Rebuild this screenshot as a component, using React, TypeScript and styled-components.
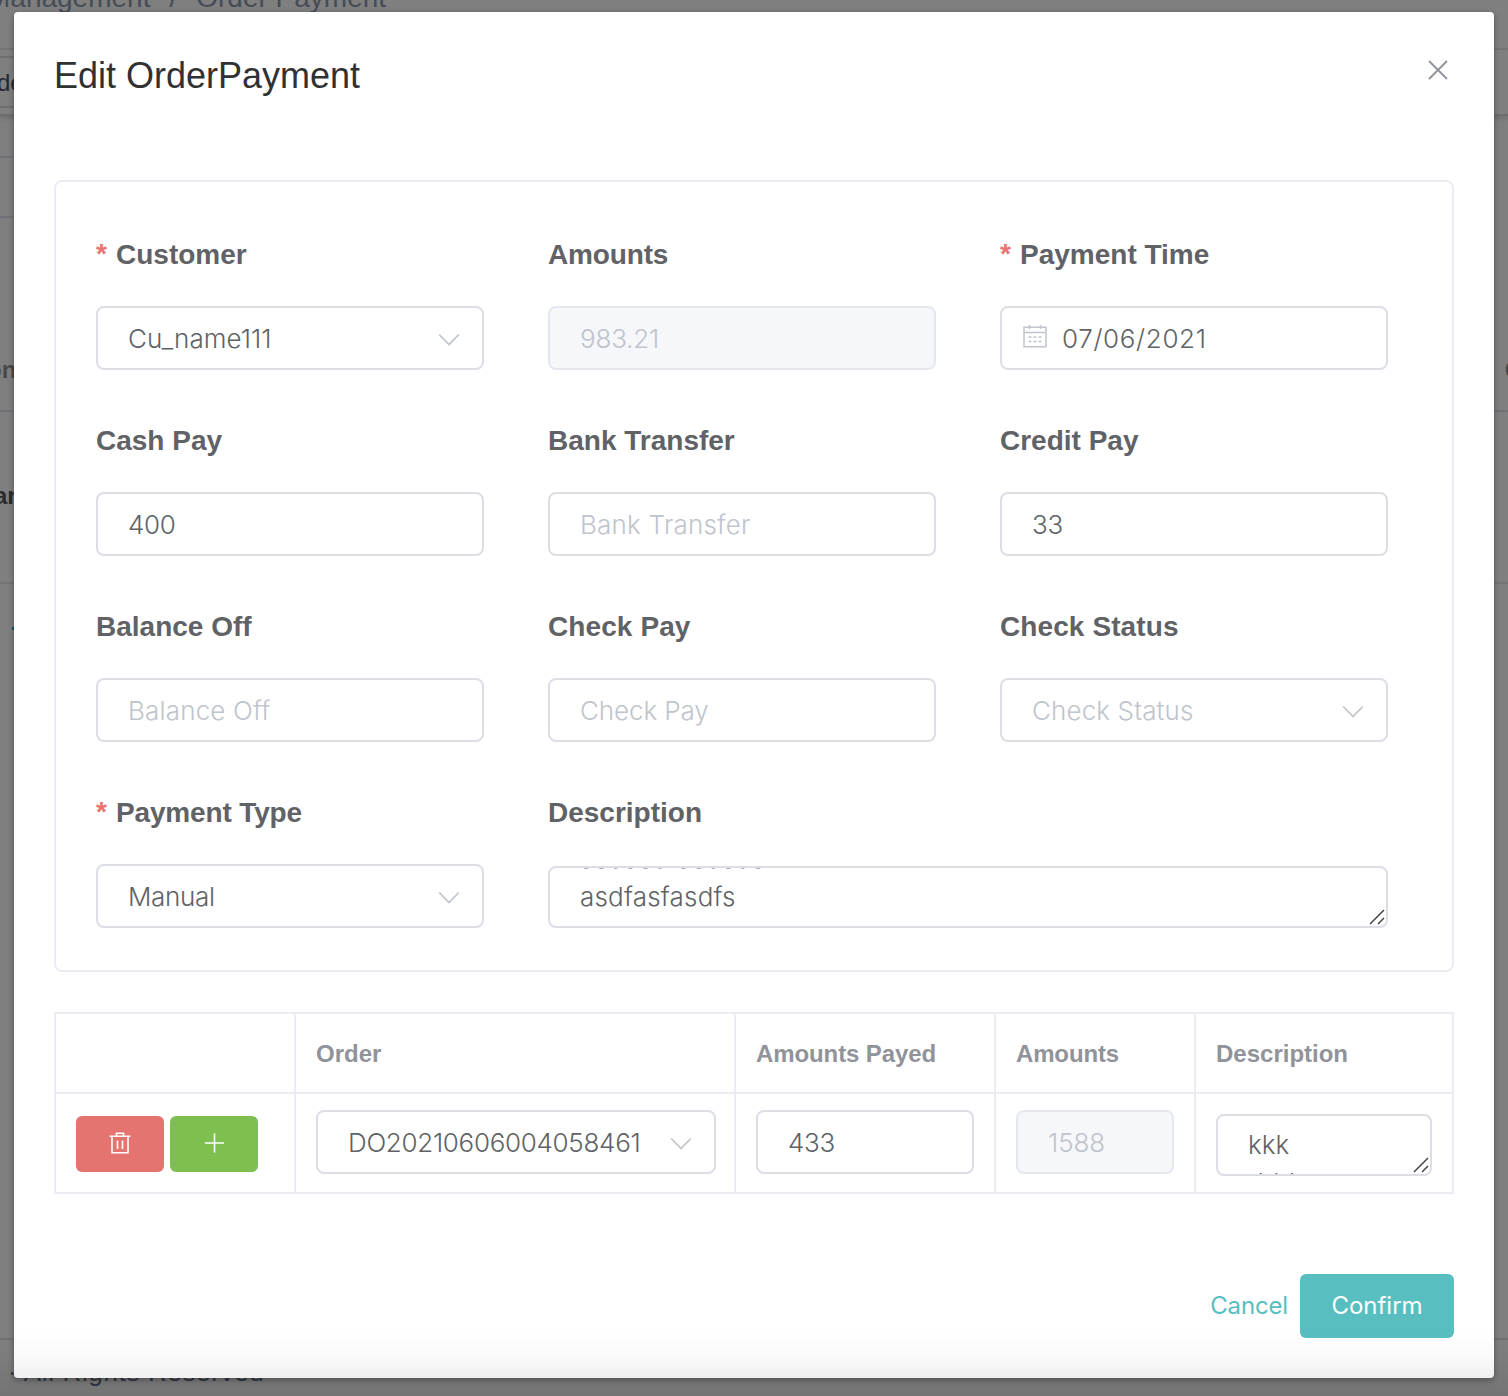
import React from "react";
import styled, { createGlobalStyle } from "styled-components";

const GlobalStyle = createGlobalStyle`
  * { box-sizing: border-box; }
  html, body { margin: 0; padding: 0; }
  body { background: #fff; overflow: hidden; font-family: "Liberation Sans", Arial, sans-serif; color: #606266; }
`;

const sans = `"Liberation Sans", Arial, sans-serif`;
const ui = `Inter, "Liberation Sans", sans-serif`;

const Screen = styled.div`
  position: relative;
  width: 1508px;
  height: 1396px;
  overflow: hidden;
`;

const Page = styled.div`
  display: flex;
  flex-direction: column;
  height: 100%;
  background: #fff;
`;

const TopBar = styled.header`
  height: 50px;
  border-bottom: 2px solid #eee;
  display: flex;
  align-items: flex-start;
  white-space: pre;
  font-size: 28px;
  line-height: 32px;
  color: #8a97ae;
`;

const Crumbs = styled.div`
  margin: -18px 0 0 -13px;
  display: flex;
  gap: 19px;
`;

const TabBar = styled.nav`
  height: 66px;
  border-bottom: 2px solid #d8dce5;
  box-shadow: 0 2px 6px rgba(0, 0, 0, 0.16);
  padding-top: 6px;
`;

const Tab = styled.div`
  width: 60px;
  height: 52px;
  border: 2px solid #d8dce5;
  border-left: 0;
  font-size: 24px;
  line-height: 50px;
  color: #495060;
  text-indent: -3px;
`;

const Band = styled.div<{ $h: number; $w?: string; $line?: string }>`
  height: ${(p) => p.$h}px;
  width: ${(p) => p.$w ?? "100%"};
  flex: none;
  border-bottom: 2px solid ${(p) => p.$line ?? "#e2e4ee"};
  display: flex;
  justify-content: space-between;
  align-items: flex-end;
  font-size: 24px;
  line-height: 28px;
  font-weight: 700;
  color: #909399;
`;

const BandText = styled.span<{ $dark?: boolean; $shift: number; $lift: number }>`
  margin: 0 ${(p) => (p.$shift > 0 ? 0 : -14)}px ${(p) => p.$lift}px ${(p) => -Math.max(p.$shift, 0)}px;
  color: ${(p) => (p.$dark ? "#55585d" : "#909399")};
`;

const TealMark = styled.div`
  width: 6px;
  height: 3px;
  margin: 43px 0 0 12px;
  background: #1fb5ad;
`;

const PageFoot = styled.footer`
  margin-top: auto;
  height: 58px;
  border-top: 2px solid #e4e4e4;
  padding: 16px 0 0 8px;
  font-size: 26px;
  line-height: 32px;
  letter-spacing: 0.65px;
  color: #66738a;
`;

const Backdrop = styled.div`
  position: absolute;
  inset: 0;
  background: rgba(0, 0, 0, 0.5);
`;

const Dialog = styled.section`
  position: absolute;
  left: 14px;
  top: 12px;
  width: 1480px;
  height: 1366px;
  background: #fff;
  border-radius: 4px;
  box-shadow: 0 2px 6px rgba(0, 0, 0, 0.35);
  padding: 40px;
  display: flex;
  flex-direction: column;
`;

const BottomShade = styled.div`
  position: absolute;
  left: 0;
  right: 0;
  bottom: 0;
  height: 66px;
  background: linear-gradient(rgba(0, 0, 0, 0), rgba(0, 0, 0, 0.02) 40%, rgba(0, 0, 0, 0.09));
`;

const Head = styled.div`
  display: flex;
  justify-content: space-between;
  align-items: flex-start;
  height: 128px;
  flex: none;
`;

const Title = styled.h1`
  margin: 0;
  padding-top: 4px;
  font: 400 36px/40px ${sans};
  color: #303133;
`;

const CloseIcon = styled.svg`
  width: 20px;
  height: 20px;
  margin: 8px 6px 0 0;
  stroke: #909399;
  stroke-width: 1.8;
  fill: none;
`;

const Card = styled.div`
  height: 792px;
  flex: none;
  border: 2px solid #ecedf4;
  border-radius: 8px;
  padding: 20px 40px 0;
  display: grid;
  grid-template-columns: repeat(3, 388px);
  grid-auto-rows: 168px;
  gap: 18px 64px;
`;

const Field = styled.div<{ $span?: number }>`
  grid-column: span ${(p) => p.$span ?? 1};
  display: flex;
  flex-direction: column;
`;

const Label = styled.label<{ $ls?: number }>`
  height: 104px;
  padding-top: 2px;
  display: flex;
  align-items: center;
  font: 700 28px/32px ${sans};
  letter-spacing: ${(p) => p.$ls ?? 0}px;
  color: #606266;
  white-space: pre;
`;

const Star = styled.span`
  color: #ea746f;
  width: 20px;
  margin-top: -2px;
  letter-spacing: 0;
`;

const Box = styled.div<{ $disabled?: boolean; $empty?: boolean; $w?: number }>`
  width: ${(p) => (p.$w ? p.$w + "px" : "100%")};
  height: 64px;
  flex: none;
  border: 2px solid ${(p) => (p.$disabled ? "#e4e7ed" : "#dcdee6")};
  border-radius: 8px;
  background: ${(p) => (p.$disabled ? "#f5f7fa" : "#fff")};
  padding: 0 22px 0 30px;
  display: flex;
  align-items: center;
  justify-content: space-between;
  font: 300 26px/39px ${ui};
  color: ${(p) => (p.$disabled || p.$empty ? "#c0c4cc" : "#606266")};
  white-space: nowrap;
`;

const DateBox = styled(Box)`
  justify-content: flex-start;
  padding-left: 21px;
  gap: 15px;
`;

const Value = styled.span<{ $ls?: number }>`
  letter-spacing: ${(p) => p.$ls ?? -0.3}px;
`;

const Area = styled.div<{ $w?: number; $fromEnd?: boolean; $top: number }>`
  position: relative;
  width: ${(p) => (p.$w ? p.$w + "px" : "100%")};
  height: 62px;
  margin-top: ${(p) => p.$top}px;
  border: 2px solid #dcdee6;
  border-radius: 8px;
  overflow: hidden;
  display: flex;
  flex-direction: column;
  justify-content: ${(p) => (p.$fromEnd ? "flex-end" : "flex-start")};
  padding: ${(p) => (p.$fromEnd ? "0 30px 10px" : "9px 30px 0")};
  font: 300 26px/39px ${ui};
  color: #606266;
`;

const Line = styled.span<{ $ls?: number; $h?: number }>`
  flex: none;
  height: ${(p) => p.$h ?? 39}px;
  letter-spacing: ${(p) => p.$ls ?? 0}px;
`;

const GripIcon = styled.svg`
  position: absolute;
  right: 0;
  bottom: 0;
  width: 18px;
  height: 18px;
  stroke: #444;
  stroke-width: 1.5;
`;

const ChevronIcon = styled.svg`
  width: 22px;
  height: 14px;
  margin-top: 3px;
  fill: none;
  stroke: #c0c4cc;
  stroke-width: 1.7;
`;

const CalIcon = styled.svg`
  width: 24px;
  height: 24px;
  margin-top: -4px;
  fill: none;
  stroke: #c0c4cc;
  stroke-width: 1.5;
`;

const Table = styled.div`
  margin-top: 40px;
  flex: none;
  width: 1400px;
  border: 2px solid #ecedf4;
  display: grid;
  grid-template-columns: 238px 440px 260px 200px 258px;
  grid-template-rows: 78px 100px;
`;

const Cell = styled.div<{ $first?: boolean; $head?: boolean; $ls?: number }>`
  border-left: ${(p) => (p.$first ? 0 : 2)}px solid #ecedf4;
  border-top: ${(p) => (p.$head ? 0 : 2)}px solid #ecedf4;
  padding-left: 20px;
  padding-top: ${(p) => (p.$head ? 2 : 0)}px;
  display: flex;
  align-items: center;
  gap: 6px;
  font: 700 24px/28px ${sans};
  letter-spacing: ${(p) => p.$ls ?? 0}px;
  color: #909399;
`;

const IconButton = styled.button<{ $bg: string }>`
  width: 88px;
  height: 56px;
  margin: 2px 0 0;
  border: 0;
  padding: 0;
  border-radius: 6px;
  background: ${(p) => p.$bg};
  display: flex;
  align-items: center;
  justify-content: center;
`;

const BtnIcon = styled.svg`
  width: 24px;
  height: 24px;
  fill: none;
  stroke: #fff;
  stroke-width: 1.6;
  margin-top: -2px;
`;

const CellBox = styled(Box)`
  margin-top: -2px;
`;

const Foot = styled.div`
  margin-top: 80px;
  display: flex;
  justify-content: flex-end;
  align-items: center;
  gap: 12px;
`;

const TextButton = styled.button`
  border: 0;
  padding: 0;
  background: none;
  font: 400 24px/32px ${ui};
  letter-spacing: -0.15px;
  color: #58bec0;
`;

const Primary = styled.button`
  width: 154px;
  height: 64px;
  border: 0;
  padding: 0;
  border-radius: 6px;
  background: #58bec0;
  color: #fff;
  font: 400 24px/32px ${ui};
`;

const Chevron = () => (
  <ChevronIcon viewBox="0 0 22 14"><path d="M1.2 1.5 11 11.5 20.8 1.5" /></ChevronIcon>
);
const Grip = () => (
  <GripIcon viewBox="0 0 18 18"><path d="M2 16 16 2M10 16l6-6" /></GripIcon>
);

type FieldSpec = {
  label: string;
  labelSpacing?: number;
  spacing?: number;
  required?: boolean;
  value: string;
  empty?: boolean;
  disabled?: boolean;
  select?: boolean;
  date?: boolean;
};

const fields: FieldSpec[] = [
  { label: "Customer", required: true, value: "Cu_name111", spacing: 0.05, select: true },
  { label: "Amounts", labelSpacing: -0.15, value: "983.21", spacing: -0.2, disabled: true },
  { label: "Payment Time", required: true, value: "07/06/2021", spacing: 0.65, date: true },
  { label: "Cash Pay", value: "400" },
  { label: "Bank Transfer", value: "Bank Transfer", spacing: 0.22, empty: true },
  { label: "Credit Pay", value: "33" },
  { label: "Balance Off", value: "Balance Off", spacing: 0.17, empty: true },
  { label: "Check Pay", labelSpacing: 0.1, value: "Check Pay", spacing: -0.1, empty: true },
  { label: "Check Status", labelSpacing: 0.1, value: "Check Status", spacing: 0.12, empty: true, select: true },
  { label: "Payment Type", labelSpacing: -0.15, required: true, value: "Manual", select: true },
];

const FormField = ({ f }: { f: FieldSpec }) => (
  <Field>
    <Label $ls={f.labelSpacing}>{f.required && <Star>*</Star>}{f.label}</Label>
    {f.date ? (
      <DateBox>
        <CalIcon viewBox="0 0 24 24">
          <path d="M1 3.2h22v19.6H1zM1 8.5h22M6.5 1v4M17.5 1v4M5.5 13h3M10.5 13h3M15.5 13h3M5.5 17.5h3M10.5 17.5h3M15.5 17.5h3" />
        </CalIcon>
        <Value $ls={f.spacing}>{f.value}</Value>
      </DateBox>
    ) : (
      <Box $disabled={f.disabled} $empty={f.empty}>
        <Value $ls={f.spacing}>{f.value}</Value>
        {f.select && <Chevron />}
      </Box>
    )}
  </Field>
);

export default function App() {
  return (
    <Screen>
      <GlobalStyle />
      <Page>
        <TopBar>
          <Crumbs><span>Management</span><span>/</span><span>Order Payment</span></Crumbs>
        </TopBar>
        <TabBar><Tab>der</Tab></TabBar>
        <Band $h={42} $w="760px" />
        <Band $h={60} $w="760px" />
        <Band $h={194}>
          <BandText $shift={13} $lift={26}>on</BandText>
          <BandText $shift={-1} $lift={26}>C</BandText>
        </Band>
        <Band $h={172} $line="#e8e8ee">
          <BandText $dark $shift={6} $lift={72}>an</BandText>
          <BandText $dark $shift={-1} $lift={72}>0</BandText>
        </Band>
        <TealMark />
        <PageFoot>· All Rights Reserved</PageFoot>
      </Page>
      <Backdrop />
      <Dialog>
        <Head>
          <Title>Edit OrderPayment</Title>
          <CloseIcon viewBox="0 0 20 20"><path d="M1 1 19 19M19 1 1 19" /></CloseIcon>
        </Head>
        <Card>
          {fields.map((f) => <FormField key={f.label} f={f} />)}
          <Field $span={2}>
            <Label>Description</Label>
            <Area $top={2} $fromEnd>
              <Line $h={38} $ls={0.3}>asdasdfasdsds</Line>
              <Line $ls={0.2}>asdfasfasdfs</Line>
              <Grip />
            </Area>
          </Field>
        </Card>
        <Table>
          <Cell $head $first />
          <Cell $head>Order</Cell>
          <Cell $head $ls={-0.1}>Amounts Payed</Cell>
          <Cell $head $ls={-0.15}>Amounts</Cell>
          <Cell $head>Description</Cell>
          <Cell $first>
            <IconButton $bg="#e57470">
              <BtnIcon viewBox="0 0 24 24">
                <path d="M1.5 5.2h21M8.5 5V2.2h7V5M4 5.5v16.2h16V5.5M9.5 9.5v8.5M14.5 9.5v8.5" />
              </BtnIcon>
            </IconButton>
            <IconButton $bg="#7fbf50">
              <BtnIcon viewBox="0 0 24 24"><path d="M3 12h19M12.5 2.5v19" /></BtnIcon>
            </IconButton>
          </Cell>
          <Cell><CellBox $w={400}><Value>DO20210606004058461</Value><Chevron /></CellBox></Cell>
          <Cell><CellBox $w={218}><Value>433</Value></CellBox></Cell>
          <Cell><CellBox $w={158} $disabled><Value $ls={-0.1}>1588</Value></CellBox></Cell>
          <Cell>
            <Area $w={216} $top={4}>
              <Line $h={38}>kkk</Line>
              <Line>ddd</Line>
              <Grip />
            </Area>
          </Cell>
        </Table>
        <Foot>
          <TextButton>Cancel</TextButton>
          <Primary>Confirm</Primary>
        </Foot>
      </Dialog>
      <BottomShade />
    </Screen>
  );
}
